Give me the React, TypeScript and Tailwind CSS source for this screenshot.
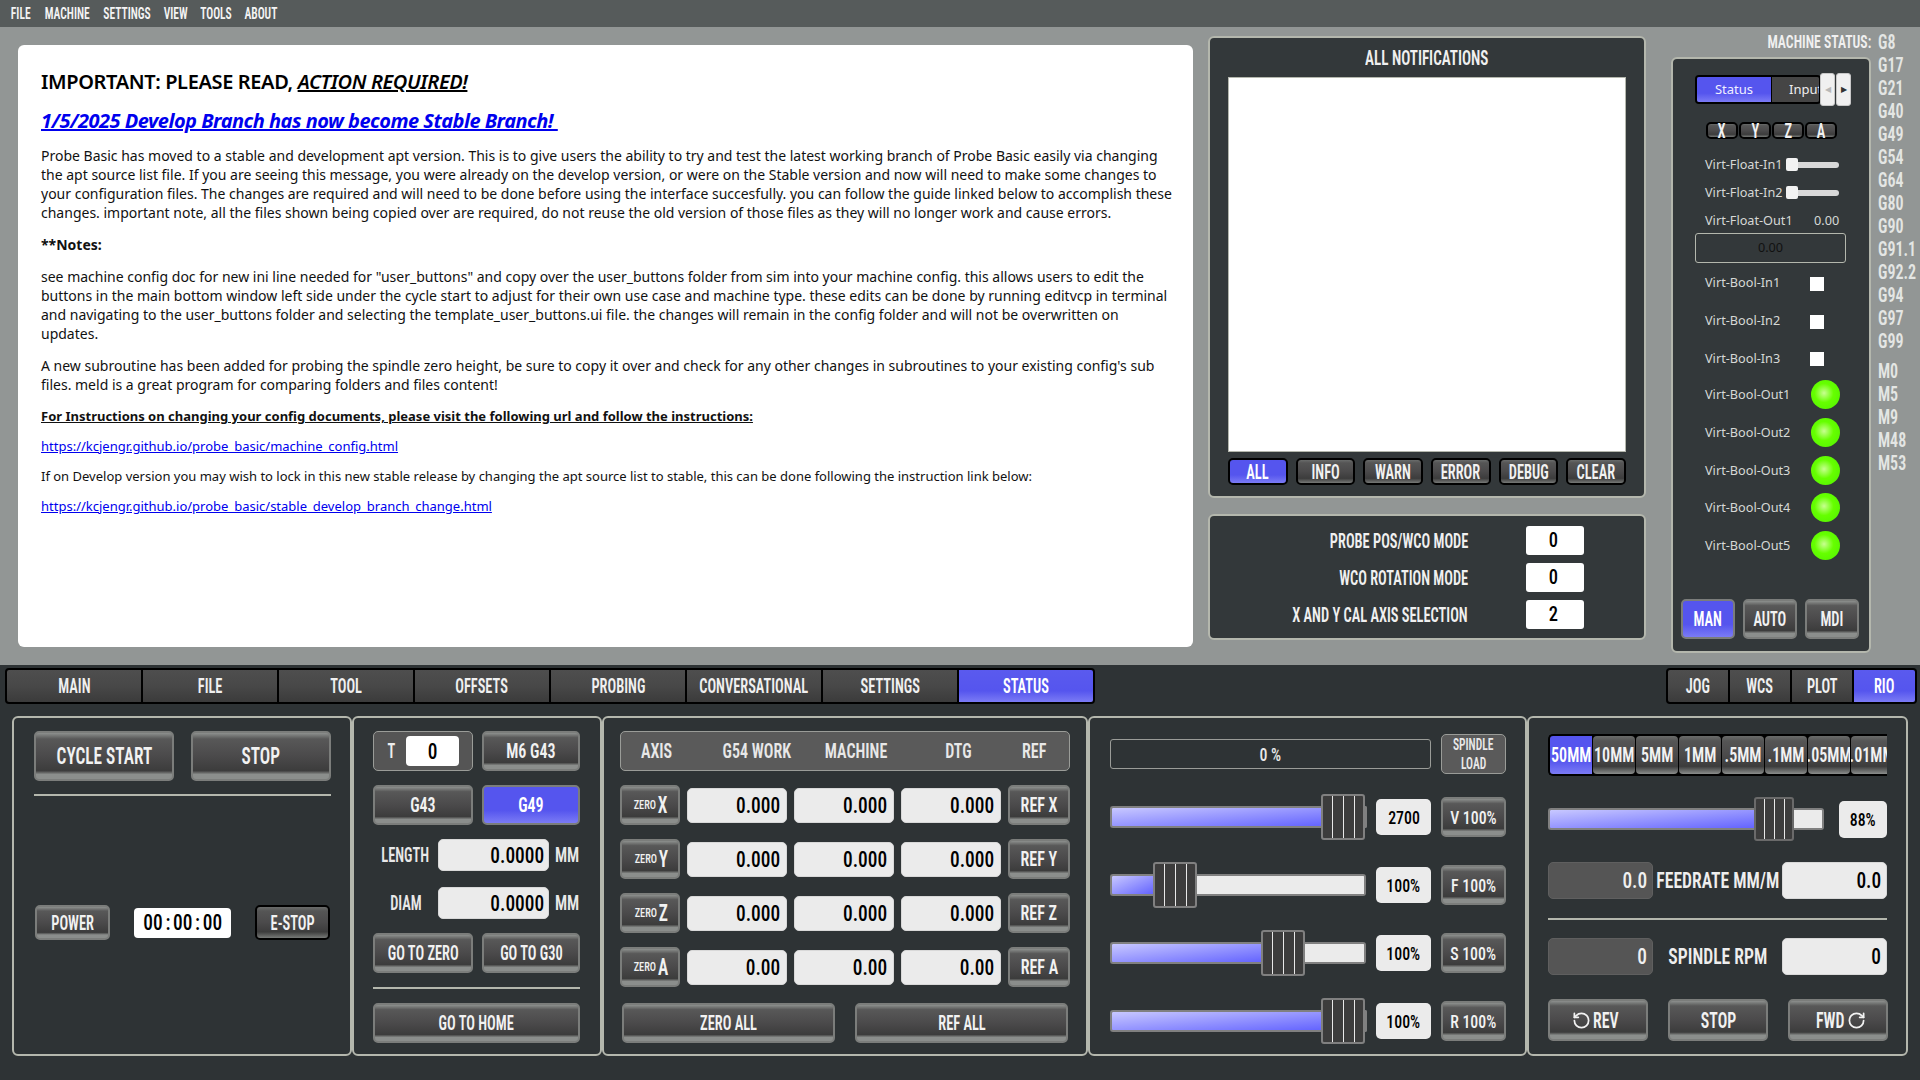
import { RotateCcw, RotateCw } from 'lucide-react'
import type { ReactNode } from 'react'

const btnGray =
  'flex items-center justify-center rounded-[5px] border-2 border-[#7b7d7b] bg-[linear-gradient(180deg,#8d908e_0%,#585858_13%,#4b4a4b_50%,#3c3c3c_82%,#8b8e8c_90%,#8b8e8c_100%)] text-[#f2f2f2] whitespace-nowrap'
const btnActive =
  'flex items-center justify-center rounded-[5px] border-2 border-[#7b7d7b] bg-[linear-gradient(180deg,#5555ee_0%,#5555ee_65%,#7b7bf5_100%)] text-white whitespace-nowrap'
const btnBlack =
  'flex items-center justify-center rounded-[5px] border-2 border-black bg-[linear-gradient(180deg,#6a6c6b_0%,#555555_13%,#4b4a4b_50%,#3c3c3c_80%,#777977_100%)] text-[#f2f2f2] whitespace-nowrap'
const box = 'rounded-[6px] border-2 border-[#b4b7ad] shrink-0'
const inputWhite =
  'flex shrink-0 items-center justify-end rounded-[5px] border border-[#d8d8d8] bg-[#ebebeb] text-black whitespace-nowrap'
const inputGray =
  'flex shrink-0 items-center justify-end rounded-[5px] border border-[#5f5f5f] bg-[#555555] text-[#f0f0f0] whitespace-nowrap'
const hr = 'h-[2px] bg-[#b4b7ad]'

// The machine font is far narrower than anything installed, so labels get squeezed
function L({ children }: { children: ReactNode }) {
  return <span className="inline-block origin-center scale-x-[0.72] whitespace-nowrap font-semibold">{children}</span>
}
function LR({ children }: { children: ReactNode }) {
  return <span className="inline-block origin-right scale-x-[0.72] whitespace-nowrap font-semibold">{children}</span>
}
function LL({ children }: { children: ReactNode }) {
  return <span className="inline-block origin-left scale-x-[0.72] whitespace-nowrap font-semibold">{children}</span>
}
function W({ children }: { children: ReactNode }) {
  return <span className="inline-block origin-center scale-x-[0.8] whitespace-nowrap font-semibold">{children}</span>
}
function WL({ children }: { children: ReactNode }) {
  return <span className="inline-block origin-left scale-x-[0.8] whitespace-nowrap font-semibold">{children}</span>
}
// Numbers sit closer to their natural width
function D({ children }: { children: ReactNode }) {
  return <span className="inline-block origin-center scale-x-[0.88] whitespace-nowrap font-medium">{children}</span>
}
function DR({ children }: { children: ReactNode }) {
  return <span className="inline-block origin-right scale-x-[0.88] whitespace-nowrap font-medium">{children}</span>
}

function Handle({ wide }: { wide?: boolean }) {
  return (
    <div
      className={
        wide
          ? 'flex h-[46px] w-[44px] shrink-0 items-center justify-center gap-[10px] rounded-[3px] border-2 border-[#808080] bg-[#3c3c3c]'
          : 'flex h-[44px] w-[40px] shrink-0 items-center justify-center gap-[9px] rounded-[3px] border-2 border-[#6a6a6a] bg-[#3c3c3c]'
      }
    >
      <div className="h-full w-[1px] bg-[#e8e8e8]" />
      <div className="h-full w-[1px] bg-[#e8e8e8]" />
      <div className="h-full w-[1px] bg-[#e8e8e8]" />
    </div>
  )
}

function OverrideRow({ fill, value, label }: { fill: string; value: string; label: string }) {
  return (
    <div className="flex h-[46px] items-center">
      <div className="flex w-[256px] items-center">
        <div className={`${fill} h-[22px] shrink-0 rounded-l-[3px] border-2 border-r-0 border-[#808080] bg-[linear-gradient(to_bottom_right,#c8c8ff,#6464ff)]`} />
        <Handle wide />
        <div className="h-[22px] flex-1 rounded-r-[3px] border-2 border-l-0 border-[#808080] bg-[#ebebeb]" />
      </div>
      <div className="ml-[10px] flex h-[36px] w-[55px] items-center justify-center rounded-[5px] bg-[#ebebeb] text-[18px] text-black">
        <D>{value}</D>
      </div>
      <div className={`${btnGray} ml-[10px] h-[40px] w-[65px] text-[18px]`}>
        <D>{label}</D>
      </div>
    </div>
  )
}

function ZeroBtn({ axis }: { axis: string }) {
  return (
    <div className={`${btnGray} h-[40px]`}>
      <span className="inline-block origin-right scale-x-[0.86] text-[12px] font-medium">ZERO</span>
      <span className="text-[24px] leading-none">
        <L>{axis}</L>
      </span>
    </div>
  )
}

function DroRow({ axis, v }: { axis: string; v: string }) {
  const cell = `${inputWhite} h-[35px] pr-[6px] text-[22px]`
  return (
    <div className="grid grid-cols-[60px_100px_100px_100px_62px] items-center gap-x-[7px]">
      <ZeroBtn axis={axis} />
      <div className={cell}>
        <DR>{v}</DR>
      </div>
      <div className={cell}>
        <DR>{v}</DR>
      </div>
      <div className={cell}>
        <DR>{v}</DR>
      </div>
      <div className={`${btnGray} h-[40px] text-[20px]`}>
        <W>REF {axis}</W>
      </div>
    </div>
  )
}

function VirtRow({ children, label }: { children?: ReactNode; label: string }) {
  return (
    <div className="ml-[32px] flex h-[28px] items-center font-['Noto_Sans',sans-serif] text-[12.7px] text-[#d6d8d6]">
      <span className="w-[81px] shrink-0 whitespace-nowrap">{label}</span>
      {children}
    </div>
  )
}

function MiniSlider() {
  return (
    <div className="relative ml-[3px] h-[6px] w-[50px] rounded-[3px] bg-[#d8d8d8]">
      <div className="absolute left-[-3px] top-[-4px] h-[13px] w-[12px] rounded-[2px] bg-[#f2f2f2]" />
    </div>
  )
}

function BoolIn({ label }: { label: string }) {
  return (
    <div className="ml-[32px] flex h-[37.7px] items-center font-['Noto_Sans',sans-serif] text-[12.7px] text-[#d6d8d6]">
      <span className="mt-[2px] w-[105px] shrink-0 whitespace-nowrap">{label}</span>
      <div className="mt-[4px] h-[14px] w-[14px] bg-white" />
    </div>
  )
}

function BoolOut({ label }: { label: string }) {
  return (
    <div className="ml-[32px] flex h-[37.7px] items-center font-['Noto_Sans',sans-serif] text-[12.7px] text-[#d6d8d6]">
      <span className="w-[106px] shrink-0 whitespace-nowrap">{label}</span>
      <div className="h-[29px] w-[29px] rounded-full bg-[radial-gradient(circle_at_45%_45%,#c8ff90_0%,#66ff00_42%,#4ef000_100%)]" />
    </div>
  )
}

function ProbeRow({ label, v }: { label: string; v: string }) {
  return (
    <div className="flex h-[29px] items-center">
      <div className="w-[258px] text-right text-[20px] text-[#f0f0f0]">
        <LR>{label}</LR>
      </div>
      <div className="ml-[58px] flex h-[29px] w-[58px] items-center justify-center rounded-[3px] bg-white pr-[4px] text-[21px] text-black">
        <D>{v}</D>
      </div>
    </div>
  )
}

const gCodes = ['G8', 'G17', 'G21', 'G40', 'G49', 'G54', 'G64', 'G80', 'G90', 'G91.1', 'G92.2', 'G94', 'G97', 'G99']
const mCodes = ['M0', 'M5', 'M9', 'M48', 'M53']
const mainTabs = ['MAIN', 'FILE', 'TOOL', 'OFFSETS', 'PROBING', 'CONVERSATIONAL', 'SETTINGS']
const jogSteps = ['10MM', '5MM', '1MM', '.5MM', '.1MM', '.05MM', '.01MM']

export default function App() {
  return (
    <div className="flex h-[1080px] w-[1920px] flex-col overflow-hidden bg-[#2e3335] font-['Roboto_Condensed',sans-serif] text-white">
      {/* Menu bar */}
      <div className="flex h-[27px] shrink-0 items-center gap-[13px] bg-[#565b5b] pl-[10px] text-[16px] text-[#f4f4f4]">
        <div className="flex w-[21px] justify-center"><L>FILE</L></div>
        <div className="flex w-[46px] justify-center"><L>MACHINE</L></div>
        <div className="flex w-[47px] justify-center"><L>SETTINGS</L></div>
        <div className="flex w-[25px] justify-center"><L>VIEW</L></div>
        <div className="flex w-[30px] justify-center"><L>TOOLS</L></div>
        <div className="flex w-[33px] justify-center"><L>ABOUT</L></div>
      </div>

      {/* Upper area */}
      <div className="flex h-[638px] shrink-0 bg-[#929695] pl-[18px]">
        {/* Notice */}
        <div className="mt-[18px] h-[602px] w-[1175px] shrink-0 rounded-[6px] bg-white pl-[23px] pt-[24px] font-['Noto_Sans',sans-serif] text-[14px] leading-[19px] text-[#111111] whitespace-nowrap">
          <div className="text-[20px] font-semibold leading-[26px] tracking-[-0.37px] text-black">
            IMPORTANT: PLEASE READ, <span className="italic underline">ACTION REQUIRED!</span>
          </div>
          <div className="mt-[13px] text-[20px] font-bold italic leading-[26px] tracking-[-0.5px] text-[#0000ee] underline">1/5/2025 Develop Branch has now become Stable Branch!&nbsp;</div>
          <p className="mt-[12px]">
            Probe Basic has moved to a stable and development apt version. This is to give users the ability to try and test the latest working branch of Probe Basic easily via changing
            <br />
            the apt source list file. If you are seeing this message, you were already on the develop version, or were on the Stable version and now will need to make some changes to
            <br />
            your configuration files. The changes are required and will need to be done before using the interface succesfully. you can follow the guide linked below to accomplish these
            <br />
            changes. important note, all the files shown being copied over are required, do not reuse the old version of those files as they will no longer work and cause errors.
          </p>
          <p className="mt-[13px] font-bold">**Notes:</p>
          <p className="mt-[13px]">
            see machine config doc for new ini line needed for "user_buttons" and copy over the user_buttons folder from sim into your machine config. this allows users to edit the
            <br />
            buttons in the main bottom window left side under the cycle start to adjust for their own use case and machine type. these edits can be done by running editvcp in terminal
            <br />
            and navigating to the user_buttons folder and selecting the template_user_buttons.ui file. the changes will remain in the config folder and will not be overwritten on
            <br />
            updates.
          </p>
          <p className="mt-[13px]">
            A new subroutine has been added for probing the spindle zero height, be sure to copy it over and check for any other changes in subroutines to your existing config's sub
            <br />
            files. meld is a great program for comparing folders and files content!
          </p>
          <p className="mt-[13px] text-[13px] font-bold underline">For Instructions on changing your config documents, please visit the following url and follow the instructions:</p>
          <p className="mt-[11px] text-[13px] text-[#0000ee] underline">https://kcjengr.github.io/probe_basic/machine_config.html</p>
          <p className="mt-[11px] text-[13px]">If on Develop version you may wish to lock in this new stable release by changing the apt source list to stable, this can be done following the instruction link below:</p>
          <p className="mt-[11px] text-[13px] text-[#0000ee] underline">https://kcjengr.github.io/probe_basic/stable_develop_branch_change.html</p>
        </div>

        {/* Notifications + probe modes */}
        <div className="ml-[15px] mt-[9px] flex w-[438px] shrink-0 flex-col gap-[16px]">
          <div className={`${box} flex h-[462px] flex-col bg-[#33383a] pl-[18px]`}>
            <div className="flex h-[39px] w-[398px] items-center justify-center pt-[2px] text-[21px] text-[#f0f0f0]">
              <L>ALL NOTIFICATIONS</L>
            </div>
            <div className="h-[375px] w-[398px] border border-[#b4b7ad] bg-white" />
            <div className="mt-[6px] grid w-[398px] grid-cols-6 gap-[8px] text-[20px]">
              <div className="flex h-[27px] items-center justify-center rounded-[5px] border-2 border-black bg-[linear-gradient(180deg,#5555ee_0%,#5555ee_65%,#7b7bf5_100%)] text-white">
                <L>ALL</L>
              </div>
              <div className={`${btnBlack} h-[27px]`}><L>INFO</L></div>
              <div className={`${btnBlack} h-[27px]`}><L>WARN</L></div>
              <div className={`${btnBlack} h-[27px]`}><L>ERROR</L></div>
              <div className={`${btnBlack} h-[27px]`}><L>DEBUG</L></div>
              <div className={`${btnBlack} h-[27px]`}><L>CLEAR</L></div>
            </div>
          </div>
          <div className={`${box} flex h-[126px] flex-col gap-[8px] bg-[#33383a] pt-[10px]`}>
            <ProbeRow label="PROBE POS/WCO MODE" v="0" />
            <ProbeRow label="WCO ROTATION MODE" v="0" />
            <ProbeRow label="X AND Y CAL AXIS SELECTION" v="2" />
          </div>
        </div>

        {/* Machine status */}
        <div className="ml-[25px] flex shrink-0">
          <div className="flex w-[200px] flex-col pt-[4px]">
            <div className="flex h-[23px] items-center justify-end text-[19px] text-[#f0f0f0]">
              <LR>MACHINE STATUS:</LR>
            </div>
            <div className={`${box} mt-[3px] flex h-[596px] flex-col bg-[#33383a]`}>
              <div className="relative ml-[22px] mt-[14px] h-[33px] w-[156px]">
                <div className="mt-[2px] flex h-[29px] w-[126px] overflow-hidden rounded-[4px] border-2 border-black font-['Noto_Sans',sans-serif] text-[13px]">
                  <div className="flex w-[74px] shrink-0 items-center justify-center bg-[linear-gradient(180deg,#5555ee_0%,#5555ee_65%,#7b7bf5_100%)] text-[#f0f0ff]">Status</div>
                  <div className="w-[1px] shrink-0 bg-black" />
                  <div className="flex flex-1 items-center bg-[#454545] pl-[17px] text-[#eeeeee]">Input</div>
                </div>
                <div className="absolute left-[125px] top-0 flex h-[33px] w-[15px] items-center justify-center rounded-[3px] border border-[#c8c8c8] bg-[#f0f0f0] text-[8px] text-[#b8b8b8]">◀</div>
                <div className="absolute left-[141px] top-0 flex h-[33px] w-[15px] items-center justify-center rounded-[3px] border border-[#c8c8c8] bg-[#f0f0f0] text-[8px] text-[#333333]">▶</div>
              </div>
              <div className="ml-[33px] mt-[16px] flex gap-[1px] text-[20px] leading-none">
                <div className={`${btnBlack} h-[17px] w-[32px]`}><L>X</L></div>
                <div className={`${btnBlack} h-[17px] w-[32px]`}><L>Y</L></div>
                <div className={`${btnBlack} h-[17px] w-[32px]`}><L>Z</L></div>
                <div className={`${btnBlack} h-[17px] w-[32px]`}><L>A</L></div>
              </div>
              <div className="mb-[-2px] mt-[12px]">
                <VirtRow label="Virt-Float-In1">
                  <MiniSlider />
                </VirtRow>
                <VirtRow label="Virt-Float-In2">
                  <MiniSlider />
                </VirtRow>
                <VirtRow label="Virt-Float-Out1">
                  <span className="ml-[28px]">0.00</span>
                </VirtRow>
              </div>
              <div className="ml-[22px] flex h-[30px] w-[151px] items-center justify-center rounded-[3px] border border-[#b4b7ad] font-['Noto_Sans',sans-serif] text-[12.7px] text-[#111111]">0.00</div>
              <BoolIn label="Virt-Bool-In1" />
              <BoolIn label="Virt-Bool-In2" />
              <BoolIn label="Virt-Bool-In3" />
              <BoolOut label="Virt-Bool-Out1" />
              <BoolOut label="Virt-Bool-Out2" />
              <BoolOut label="Virt-Bool-Out3" />
              <BoolOut label="Virt-Bool-Out4" />
              <BoolOut label="Virt-Bool-Out5" />
              <div className="mb-[12px] ml-[8px] mt-auto flex gap-[8px] text-[20px]">
                <div className={`${btnActive} h-[40px] w-[54px]`}><L>MAN</L></div>
                <div className={`${btnGray} h-[40px] w-[54px]`}><L>AUTO</L></div>
                <div className={`${btnGray} h-[40px] w-[54px]`}><L>MDI</L></div>
              </div>
            </div>
          </div>
          <div className="ml-[7px] flex flex-col pt-[4px] text-[20px] leading-[23px] text-[#e4e6e4]">
            {gCodes.map((c) => (
              <div key={c}><WL>{c}</WL></div>
            ))}
            <div className="h-[7px]" />
            {mCodes.map((c) => (
              <div key={c}><WL>{c}</WL></div>
            ))}
          </div>
        </div>
      </div>

      {/* Tab bars */}
      <div className="mt-[3px] flex h-[36px] shrink-0 justify-between pl-[5px] pr-[3px] text-[20px]">
        <div className="flex overflow-hidden rounded-[4px] border-2 border-black bg-black">
          {mainTabs.map((t) => (
            <div key={t} className="mr-[2px] flex w-[134px] items-center justify-center bg-[linear-gradient(180deg,#4e4e4e_0%,#484848_50%,#3b3b3b_100%)] text-[#f0f0f0] whitespace-nowrap">
              <L>{t}</L>
            </div>
          ))}
          <div className="flex w-[134px] items-center justify-center bg-[linear-gradient(180deg,#5a5aee_0%,#5555ee_65%,#7b7bf5_100%)]">
            <L>STATUS</L>
          </div>
        </div>
        <div className="flex overflow-hidden rounded-[4px] border-2 border-black bg-black">
          <div className="mr-[2px] flex w-[60px] items-center justify-center bg-[linear-gradient(180deg,#4e4e4e_0%,#484848_50%,#3b3b3b_100%)] text-[#f0f0f0]"><L>JOG</L></div>
          <div className="mr-[2px] flex w-[60px] items-center justify-center bg-[linear-gradient(180deg,#4e4e4e_0%,#484848_50%,#3b3b3b_100%)] text-[#f0f0f0]"><L>WCS</L></div>
          <div className="mr-[2px] flex w-[60px] items-center justify-center bg-[linear-gradient(180deg,#4e4e4e_0%,#484848_50%,#3b3b3b_100%)] text-[#f0f0f0]"><L>PLOT</L></div>
          <div className="flex w-[61px] items-center justify-center bg-[linear-gradient(180deg,#5a5aee_0%,#5555ee_65%,#7b7bf5_100%)]"><L>RIO</L></div>
        </div>
      </div>

      {/* Group boxes */}
      <div className="ml-[12px] mt-[12px] flex h-[340px] shrink-0">
        {/* Cycle */}
        <div className={`${box} w-[340px] pl-[20px] pt-[13px]`}>
          <div className="flex gap-[17px] text-[24px]">
            <div className={`${btnGray} h-[50px] w-[140px]`}><L>CYCLE START</L></div>
            <div className={`${btnGray} h-[50px] w-[140px]`}><L>STOP</L></div>
          </div>
          <div className={`${hr} mt-[13px] w-[297px]`} />
          <div className="ml-[1px] mt-[109px] flex items-center">
            <div className={`${btnGray} h-[35px] w-[75px] text-[20px]`}><L>POWER</L></div>
            <div className="ml-[24px] flex h-[30px] w-[97px] items-center justify-center rounded-[4px] bg-white text-[22px] text-black [word-spacing:-2px]">
              <D>00 : 00 : 00</D>
            </div>
            <div className={`${btnBlack} ml-[24px] h-[35px] w-[75px] text-[20px]`}><L>E-STOP</L></div>
          </div>
        </div>

        {/* Tool */}
        <div className={`${box} w-[250px] pl-[19px] pt-[13px]`}>
          <div className="grid w-[207px] grid-cols-[100px_98px] gap-x-[9px] gap-y-[14px] text-[20px]">
            <div className="flex h-[40px] items-center rounded-[5px] border border-[#9a9c98] bg-[#555555] pl-[12px] text-[20px] text-[#eeeeee]">
              <L>T</L>
              <div className="ml-[9px] flex h-[30px] w-[53px] shrink-0 items-center justify-center rounded-[4px] bg-white text-[22px] text-black">
                <D>0</D>
              </div>
            </div>
            <div className={`${btnGray} h-[40px]`}><W>M6 G43</W></div>
            <div className={`${btnGray} h-[40px]`}><W>G43</W></div>
            <div className={`${btnActive} h-[40px]`}><W>G49</W></div>
          </div>
          <div className="mt-[14px] flex h-[32px] w-[207px] items-center text-[20px] text-[#e8e8e8]">
            <span className="flex w-[65px] shrink-0 justify-center"><L>LENGTH</L></span>
            <div className={`${inputWhite} h-[32px] w-[111px] pr-[4px] text-[22px]`}><DR>0.0000</DR></div>
            <span className="ml-[6px] shrink-0"><WL>MM</WL></span>
          </div>
          <div className="mt-[16px] flex h-[32px] w-[207px] items-center text-[20px] text-[#e8e8e8]">
            <span className="flex w-[65px] shrink-0 justify-center"><L>DIAM</L></span>
            <div className={`${inputWhite} h-[32px] w-[111px] pr-[4px] text-[22px]`}><DR>0.0000</DR></div>
            <span className="ml-[6px] shrink-0"><WL>MM</WL></span>
          </div>
          <div className="mt-[14px] grid w-[207px] grid-cols-[100px_98px] gap-x-[9px] text-[20px]">
            <div className={`${btnGray} h-[40px]`}><L>GO TO ZERO</L></div>
            <div className={`${btnGray} h-[40px]`}><L>GO TO G30</L></div>
          </div>
          <div className={`${hr} mt-[14px] w-[207px]`} />
          <div className={`${btnGray} mt-[14px] h-[40px] w-[207px] text-[20px]`}><L>GO TO HOME</L></div>
        </div>

        {/* DRO */}
        <div className={`${box} w-[486px] pl-[16px] pt-[13px]`}>
          <div className="grid h-[40px] w-[450px] grid-cols-[72px_128px_70px_134px_18px] items-center rounded-[5px] border border-[#9a9c98] bg-[#5a5a5a] text-[20px] text-[#e8e8e8]">
            <div className="flex justify-center whitespace-nowrap"><W>AXIS</W></div>
            <div className="flex justify-center whitespace-nowrap"><W>G54 WORK</W></div>
            <div className="flex justify-center whitespace-nowrap"><W>MACHINE</W></div>
            <div className="flex justify-center whitespace-nowrap"><W>DTG</W></div>
            <div className="flex justify-center whitespace-nowrap"><W>REF</W></div>
          </div>
          <div className="mt-[14px] flex w-[450px] flex-col gap-[14px]">
            <DroRow axis="X" v="0.000" />
            <DroRow axis="Y" v="0.000" />
            <DroRow axis="Z" v="0.000" />
            <DroRow axis="A" v="0.00" />
          </div>
          <div className="ml-[2px] mt-[16px] flex gap-[20px] text-[20px]">
            <div className={`${btnGray} h-[40px] w-[213px]`}><L>ZERO ALL</L></div>
            <div className={`${btnGray} h-[40px] w-[213px]`}><L>REF ALL</L></div>
          </div>
        </div>

        {/* Overrides */}
        <div className={`${box} w-[439px] pl-[20px] pt-[16px]`}>
          <div className="flex h-[40px] items-center">
            <div className="flex h-[30px] w-[321px] items-center justify-center rounded-[3px] border border-[#9a9c98] text-[18px] text-[#e8e8e8]">
              <D>0 %</D>
            </div>
            <div className="ml-[10px] flex h-[40px] w-[65px] flex-col items-center justify-center rounded-[5px] border border-[#9a9c98] bg-[#5a5a5a] text-[16px] leading-[19px] text-[#e8e8e8]">
              <L>SPINDLE</L>
              <L>LOAD</L>
            </div>
          </div>
          <div className="mt-[20px] flex flex-col gap-[22px]">
            <OverrideRow fill="w-[211px]" value="2700" label="V 100%" />
            <OverrideRow fill="w-[43px]" value="100%" label="F 100%" />
            <OverrideRow fill="w-[151px]" value="100%" label="S 100%" />
            <OverrideRow fill="w-[211px]" value="100%" label="R 100%" />
          </div>
        </div>

        {/* Jog */}
        <div className={`${box} w-[381px] pl-[19px] pt-[16px]`}>
          <div className="flex h-[42px] w-[339px] overflow-hidden rounded-l-[5px] border-y-2 border-l-2 border-black bg-black text-[20px]">
            <div className="flex w-[42px] shrink-0 items-center justify-center overflow-hidden bg-[linear-gradient(180deg,#5555ee_0%,#5555ee_65%,#7b7bf5_100%)] whitespace-nowrap">
              <W>50MM</W>
            </div>
            {jogSteps.map((s) => (
              <div key={s} className="ml-[1px] flex w-[42px] shrink-0 items-center justify-center overflow-hidden rounded-[4px] bg-[linear-gradient(180deg,#6a6c6b_0%,#555555_13%,#4b4a4b_50%,#3c3c3c_80%,#8b8e8c_100%)] whitespace-nowrap text-[#f2f2f2]">
                <W>{s}</W>
              </div>
            ))}
          </div>
          <div className="mt-[21px] flex h-[44px] items-center">
            <div className="flex w-[276px] items-center">
              <div className="h-[22px] w-[206px] shrink-0 rounded-l-[3px] border-2 border-r-0 border-[#808080] bg-[linear-gradient(to_bottom_right,#c8c8ff,#6464ff)]" />
              <Handle />
              <div className="h-[22px] flex-1 rounded-r-[3px] border-2 border-l-0 border-[#808080] bg-[#ebebeb]" />
            </div>
            <div className="ml-[15px] flex h-[37px] w-[48px] items-center justify-center rounded-[5px] bg-[#ebebeb] text-[18px] text-black">
              <D>88%</D>
            </div>
          </div>
          <div className="mt-[21px] flex h-[37px] w-[339px] items-center">
            <div className={`${inputGray} h-[37px] w-[105px] pr-[5px] text-[22px]`}><DR>0.0</DR></div>
            <div className="flex min-w-0 flex-1 justify-center text-[22px] text-[#eeeeee]"><W>FEEDRATE MM/M</W></div>
            <div className={`${inputWhite} h-[37px] w-[105px] pr-[5px] text-[22px]`}><DR>0.0</DR></div>
          </div>
          <div className={`${hr} mt-[19px] w-[339px]`} />
          <div className="mt-[18px] flex h-[37px] w-[339px] items-center">
            <div className={`${inputGray} h-[37px] w-[105px] pr-[5px] text-[22px]`}><DR>0</DR></div>
            <div className="flex min-w-0 flex-1 justify-center text-[22px] text-[#eeeeee]"><W>SPINDLE RPM</W></div>
            <div className={`${inputWhite} h-[37px] w-[105px] pr-[5px] text-[22px]`}><DR>0</DR></div>
          </div>
          <div className="mt-[24px] flex gap-[20px] text-[22px]">
            <div className={`${btnGray} h-[42px] w-[100px] gap-[2px] pl-[5px]`}>
              <RotateCcw size={19} strokeWidth={2.2} />
              <LL>REV</LL>
            </div>
            <div className={`${btnGray} h-[42px] w-[100px]`}><L>STOP</L></div>
            <div className={`${btnGray} h-[42px] w-[100px] gap-[2px] pr-[5px]`}>
              <LR>FWD</LR>
              <RotateCw size={19} strokeWidth={2.2} />
            </div>
          </div>
        </div>
      </div>
    </div>
  )
}
